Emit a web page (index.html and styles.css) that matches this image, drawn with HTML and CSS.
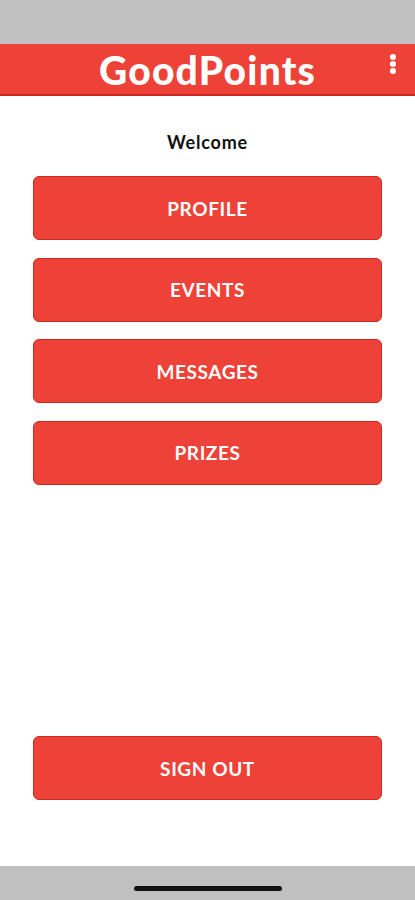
FILE: index.html
```html
<!DOCTYPE html>
<html>
<head>
    <title>GoodPoints</title>
    <link rel="stylesheet" href="styles.css">
</head>
<body>
    <div class="app">
        <div class="status-bar"></div>

        <header class="top-bar">
            <span></span>
            <h1 class="brand">GoodPoints</h1>
            <button class="menu-button" aria-label="Menu">
                <svg width="8" height="22" viewBox="0 0 8 22">
                    <circle cx="4" cy="4" r="3" fill="#ffffff"/>
                    <circle cx="4" cy="11" r="3" fill="#ffffff"/>
                    <circle cx="4" cy="18" r="3" fill="#ffffff"/>
                </svg>
            </button>
        </header>

        <main class="home">
            <p class="welcome">Welcome</p>

            <nav class="menu">
                <button class="red-button">PROFILE</button>
                <button class="red-button">EVENTS</button>
                <button class="red-button">MESSAGES</button>
                <button class="red-button">PRIZES</button>
            </nav>

            <button class="red-button sign-out">SIGN OUT</button>
        </main>

        <div class="home-bar">
            <div class="home-indicator"></div>
        </div>
    </div>
</body>
</html>
```

FILE: styles.css
```css
body {
    margin: 0;
    font-family: Lato, "Noto Sans", sans-serif;
    background-color: #ffffff;
}

.app {
    width: 415px;
    height: 900px;
    display: flex;
    flex-direction: column;
}

.status-bar {
    height: 44px;
    background-color: #c0c0c0;
}

.top-bar {
    height: 50px;
    background-color: #ee4137;
    border-bottom: 2px solid #c8281f;
    display: grid;
    grid-template-columns: 1fr auto 1fr;
    align-items: center;
}

.brand {
    margin: 0;
    color: #ffffff;
    font-size: 39px;
    font-weight: 900;
    letter-spacing: 1.2px;
    line-height: 1;
    padding-top: 2px;
}

.menu-button {
    justify-self: end;
    margin-right: 18px;
    margin-top: -10px;
    padding: 0;
    border: none;
    background: none;
    display: flex;
}

.home {
    flex: 1;
    display: flex;
    flex-direction: column;
    align-items: center;
    padding-bottom: 66px;
}

.welcome {
    margin: 35px 0 23px 0;
    font-size: 18px;
    font-weight: bold;
    letter-spacing: 0.8px;
    color: #111111;
}

.menu {
    display: flex;
    flex-direction: column;
    gap: 17.5px;
}

.red-button {
    width: 349px;
    height: 64px;
    background-color: #ee4137;
    border: 1.5px solid #cc2a20;
    border-radius: 6px;
    color: #ffffff;
    font-family: Lato, "Noto Sans", sans-serif;
    font-size: 19px;
    font-weight: bold;
    letter-spacing: 0.6px;
    cursor: pointer;
}

.sign-out {
    margin-top: auto;
}

.home-bar {
    height: 34px;
    background-color: #c0c0c0;
    display: flex;
    justify-content: center;
    align-items: flex-end;
}

.home-indicator {
    width: 148px;
    height: 5px;
    border-radius: 3px;
    background-color: #111111;
    margin-bottom: 9px;
}
```
